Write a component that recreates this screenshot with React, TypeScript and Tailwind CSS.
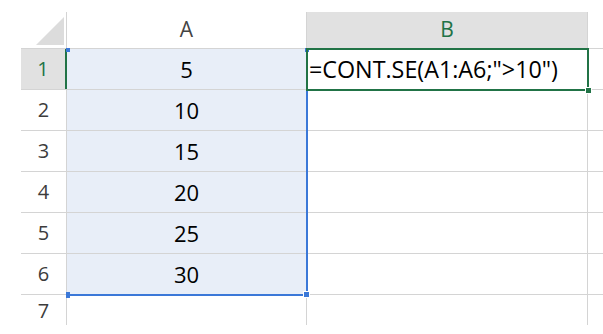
const rows = [
  { n: 1, a: '5' },
  { n: 2, a: '10' },
  { n: 3, a: '15' },
  { n: 4, a: '20' },
  { n: 5, a: '25' },
  { n: 6, a: '30' },
];

const font = { fontFamily: '"Open Sans", "Noto Sans", sans-serif' };

export default function App() {
  return (
    <div className="w-[603px] h-[334px] bg-white overflow-hidden pt-[12px]" style={font}>
      <div className="relative w-[582px] ml-[21px]">
        {/* header row */}
        <div className="flex h-[37px] border-b border-[#d4d4d4]">
          <div className="w-[46px] border-r border-[#d4d4d4] flex items-end justify-end pb-[3px] pr-[2px]">
            <div
              className="w-[28px] h-[28px] bg-[#dcdcdc]"
              style={{ clipPath: 'polygon(100% 0, 100% 100%, 0 100%)' }}
            />
          </div>
          <div className="w-[240px] border-r border-[#d4d4d4] flex items-center justify-center text-[21px] text-[#444]">
            A
          </div>
          <div className="w-[281px] bg-[#e1e1e1] border-r border-[#d4d4d4] flex items-center justify-center text-[21px] text-[#217346]">
            B
          </div>
          <div className="flex-1" />
        </div>

        {rows.map((r) => (
          <div key={r.n} className="flex h-[41px] border-b border-[#d4d4d4]">
            <div
              className={
                r.n === 1
                  ? 'w-[46px] bg-[#e1e1e1] border-r-2 border-[#217346] flex items-center justify-center text-[20px] text-[#217346]'
                  : 'w-[46px] border-r border-[#d4d4d4] flex items-center justify-center text-[20px] text-[#3c3c3c]'
              }
            >
              {r.n}
            </div>
            <div className="w-[240px] bg-[#e8eef8] border-r border-[#d4d4d4] flex items-center justify-center text-[22px] text-black">
              {r.a}
            </div>
            <div className="w-[281px] border-r border-[#d4d4d4] flex items-center text-[23.3px] text-black pl-[2px]">
              {r.n === 1 ? '=CONT.SE(A1:A6;">10")' : ''}
            </div>
            <div className="flex-1" />
          </div>
        ))}

        <div className="flex h-[30px]">
          <div className="w-[46px] border-r border-[#d4d4d4] flex items-start justify-center pt-[6px] text-[20px] leading-none text-[#3c3c3c]">
            7
          </div>
          <div className="w-[240px] border-r border-[#d4d4d4]" />
          <div className="w-[281px] border-r border-[#d4d4d4]" />
        </div>

        {/* A1:A6 reference range */}
        <div className="absolute left-[46px] top-[37px] w-[241px] h-[247px] border-r-2 border-b-2 border-[#3b78d8] pointer-events-none" />
        <div className="absolute left-[45px] top-[36px] w-[4px] h-[4px] bg-[#3b78d8]" />
        <div className="absolute left-[284px] top-[36px] w-[4px] h-[4px] bg-[#3b78d8]" />
        <div className="absolute left-[45px] top-[280px] w-[4px] h-[6px] bg-[#3b78d8]" />
        <div className="absolute left-[282px] top-[279px] w-[7px] h-[7px] bg-[#3b78d8] border border-white" />

        {/* B1 active cell */}
        <div className="absolute left-[285px] top-[36px] w-[283px] h-[43px] border-2 border-[#217346] pointer-events-none" />
        <div className="absolute left-[564px] top-[75px] w-[7px] h-[7px] bg-[#217346] border border-white" />
      </div>
    </div>
  );
}
